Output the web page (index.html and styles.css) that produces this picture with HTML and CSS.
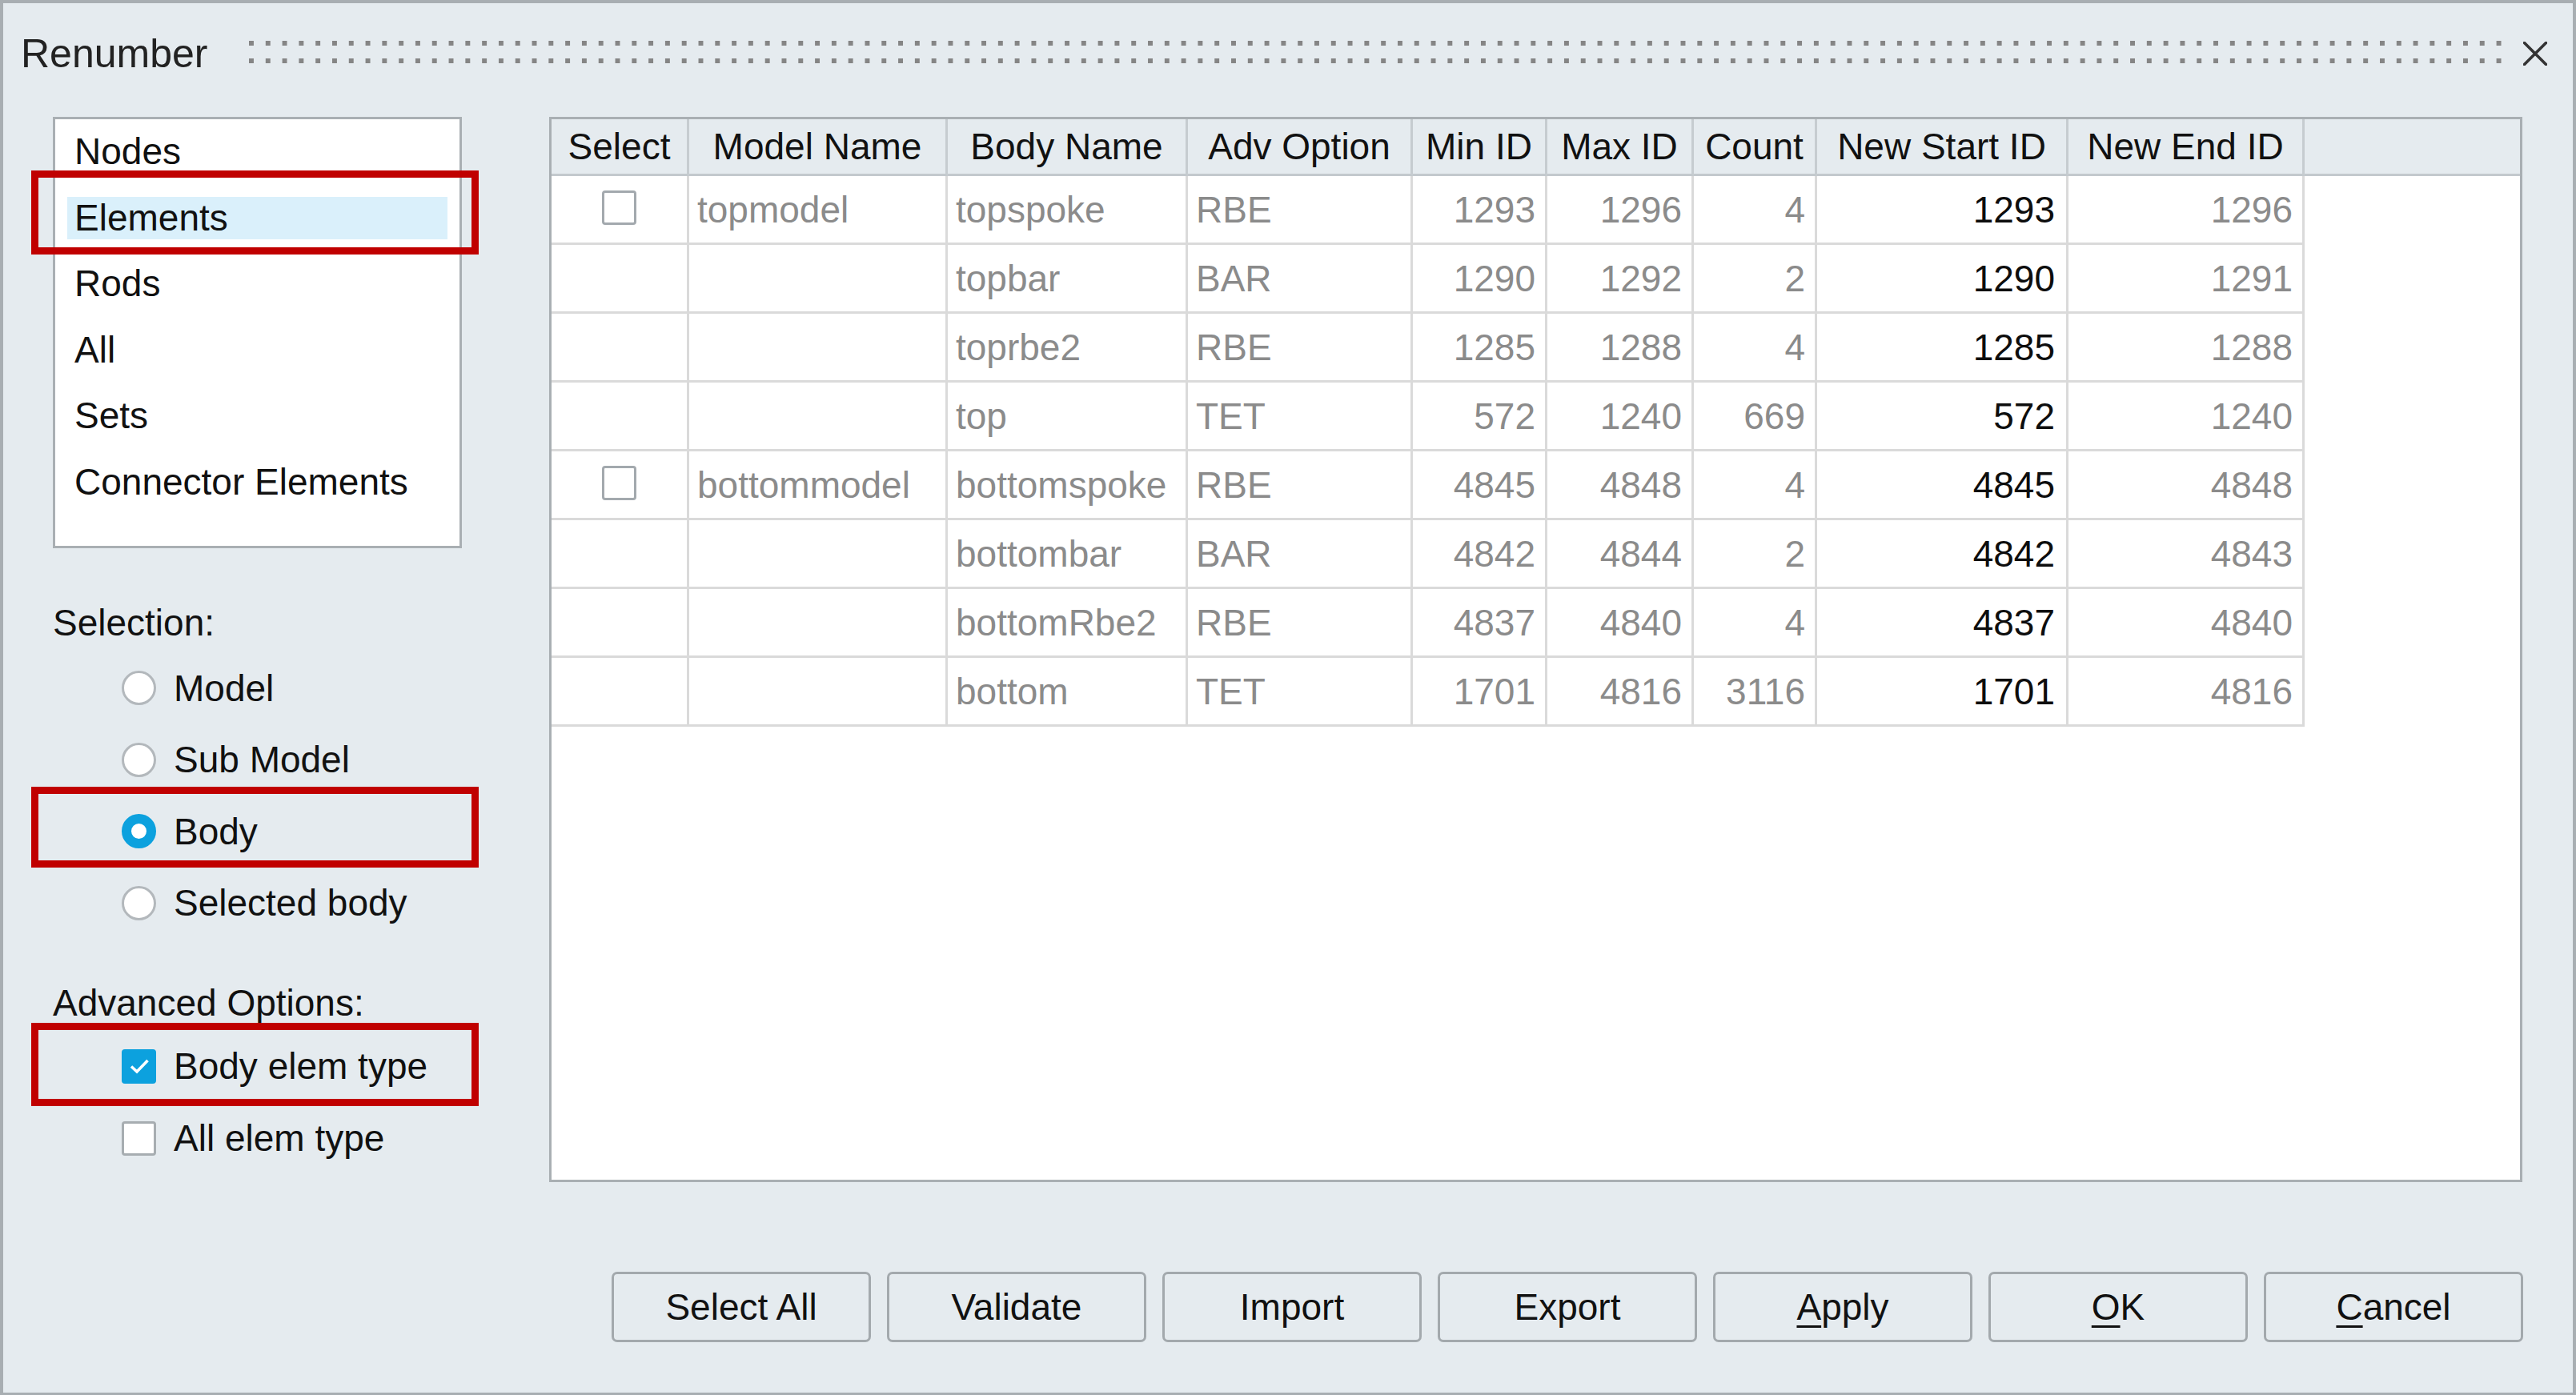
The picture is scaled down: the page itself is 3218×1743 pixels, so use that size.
FILE: index.html
```html
<!doctype html>

<html lang="en">
  <head>
    <meta charset="utf-8"/>
    <title>Renumber</title>
    <link rel="stylesheet" href="styles.css">
  </head>
  <body>
    <div class="dialog">
      <div class="titlebar">
        <span class="titlebar__title">Renumber</span>
        <span class="titlebar__grip"></span>
        <span class="titlebar__close">
          <svg width="30" height="30" viewBox="0 0 30 30">
            <path d="M1.5 1.5 L28.5 28.5 M28.5 1.5 L1.5 28.5" stroke="#333" stroke-width="3.6" stroke-linecap="round"/>
          </svg>
        </span>
      </div>

      <div class="main">
        <div class="side">
          <ul class="list">
            <li class="list__item">Nodes</li>
            <li class="list__item list__item_active">Elements</li>
            <li class="list__item">Rods</li>
            <li class="list__item">All</li>
            <li class="list__item">Sets</li>
            <li class="list__item">Connector Elements</li>
          </ul>

          <p class="side__label">Selection:</p>
          <div class="options">
            <label class="option"><span class="radio"></span>Model</label>
            <label class="option"><span class="radio"></span>Sub Model</label>
            <label class="option"><span class="radio radio_on"></span>Body</label>
            <label class="option"><span class="radio"></span>Selected body</label>
          </div>

          <p class="side__label side__label_adv">Advanced Options:</p>
          <div class="options options_adv">
            <label class="option">
              <span class="check check_on">
                <svg width="30" height="30" viewBox="0 0 30 30">
                  <path d="M5 15.5 L12 22 L25.5 8" fill="none" stroke="#fff" stroke-width="3.6"/>
                </svg>
              </span>Body elem type
            </label>
            <label class="option"><span class="check"></span>All elem type</label>
          </div>

          <span class="mark mark_elements"></span>
          <span class="mark mark_body"></span>
          <span class="mark mark_adv"></span>
        </div>

        <div class="grid">
          <table class="grid__table">
            <thead>
              <tr>
                <th class="col-select">Select</th>
                <th class="col-model">Model Name</th>
                <th class="col-body">Body Name</th>
                <th class="col-adv">Adv Option</th>
                <th class="col-min">Min ID</th>
                <th class="col-max">Max ID</th>
                <th class="col-count">Count</th>
                <th class="col-start">New Start ID</th>
                <th class="col-end">New End ID</th>
                <th class="filler"></th>
              </tr>
            </thead>
            <tbody>
              <tr>
                <td class="cell-check"><span class="check"></span></td>
                <td>topmodel</td>
                <td>topspoke</td>
                <td>RBE</td>
                <td class="num">1293</td>
                <td class="num">1296</td>
                <td class="num">4</td>
                <td class="num num_new">1293</td>
                <td class="num">1296</td>
                <td class="filler"></td>
              </tr>
              <tr>
                <td></td>
                <td></td>
                <td>topbar</td>
                <td>BAR</td>
                <td class="num">1290</td>
                <td class="num">1292</td>
                <td class="num">2</td>
                <td class="num num_new">1290</td>
                <td class="num">1291</td>
                <td class="filler"></td>
              </tr>
              <tr>
                <td></td>
                <td></td>
                <td>toprbe2</td>
                <td>RBE</td>
                <td class="num">1285</td>
                <td class="num">1288</td>
                <td class="num">4</td>
                <td class="num num_new">1285</td>
                <td class="num">1288</td>
                <td class="filler"></td>
              </tr>
              <tr>
                <td></td>
                <td></td>
                <td>top</td>
                <td>TET</td>
                <td class="num">572</td>
                <td class="num">1240</td>
                <td class="num">669</td>
                <td class="num num_new">572</td>
                <td class="num">1240</td>
                <td class="filler"></td>
              </tr>
              <tr>
                <td class="cell-check"><span class="check"></span></td>
                <td>bottommodel</td>
                <td>bottomspoke</td>
                <td>RBE</td>
                <td class="num">4845</td>
                <td class="num">4848</td>
                <td class="num">4</td>
                <td class="num num_new">4845</td>
                <td class="num">4848</td>
                <td class="filler"></td>
              </tr>
              <tr>
                <td></td>
                <td></td>
                <td>bottombar</td>
                <td>BAR</td>
                <td class="num">4842</td>
                <td class="num">4844</td>
                <td class="num">2</td>
                <td class="num num_new">4842</td>
                <td class="num">4843</td>
                <td class="filler"></td>
              </tr>
              <tr>
                <td></td>
                <td></td>
                <td>bottomRbe2</td>
                <td>RBE</td>
                <td class="num">4837</td>
                <td class="num">4840</td>
                <td class="num">4</td>
                <td class="num num_new">4837</td>
                <td class="num">4840</td>
                <td class="filler"></td>
              </tr>
              <tr>
                <td></td>
                <td></td>
                <td>bottom</td>
                <td>TET</td>
                <td class="num">1701</td>
                <td class="num">4816</td>
                <td class="num">3116</td>
                <td class="num num_new">1701</td>
                <td class="num">4816</td>
                <td class="filler"></td>
              </tr>
            </tbody>
          </table>
        </div>
      </div>

      <div class="buttons">
        <button class="button">Select All</button>
        <button class="button">Validate</button>
        <button class="button">Import</button>
        <button class="button">Export</button>
        <button class="button"><span class="hotkey">A</span>pply</button>
        <button class="button"><span class="hotkey">O</span>K</button>
        <button class="button"><span class="hotkey">C</span>ancel</button>
      </div>
    </div>
  </body>
</html>
```

FILE: styles.css
```css
* {
  box-sizing: border-box;
}
body {
  font-family: "Liberation Sans", Arial, sans-serif;
  font-size: 46px;
  color: #1b1b1b;
  background-color: #e5ebef;
  margin: 0;
}
.dialog {
  display: flex;
  flex-direction: column;
  width: 100vw;
  height: 100vh;
  border: 4px solid #a8aeb2;
  border-bottom-width: 3px;
  background-color: #e5ebef;
}
.titlebar {
  display: flex;
  align-items: center;
  height: 126px;
  padding: 0 32px 0 22px;
  flex-shrink: 0;
}
.titlebar__title {
  font-size: 50px;
  color: #222;
}
.titlebar__grip {
  flex: 1;
  height: 28px;
  margin: -4px 27px 0 52px;
  background-image: conic-gradient(at 6px 6px, transparent 75%, #858585 0);
  background-size: 20.8px 22px;
}
.titlebar__close {
  display: block;
  width: 30px;
  height: 30px;
}
.titlebar__close svg {
  display: block;
}
.main {
  display: flex;
  flex: 1;
  margin-top: 16px;
  padding: 0 63px 0 35px;
  min-height: 0;
}
.side {
  position: relative;
  width: 559px;
  flex-shrink: 0;
}
.list {
  display: flex;
  flex-direction: column;
  gap: 29.5px;
  list-style: none;
  margin: 0 0 0 27px;
  padding: 14px 15px 0;
  width: 511px;
  height: 539px;
  border: 3px solid #a9afb3;
  background-color: #fff;
}
.list__item {
  height: 53px;
  line-height: 53px;
  padding-left: 9px;
  color: #111;
  flex-shrink: 0;
}
.list__item_active {
  background-color: #daf0fb;
}
.side__label {
  margin: 63px 0 0 27px;
  line-height: 60px;
  color: #111;
}
.side__label_adv {
  margin-top: 50px;
}
.options {
  margin-top: 7px;
}
.options_adv {
  margin-top: 4px;
}
.option {
  display: flex;
  align-items: center;
  height: 89.5px;
  padding-left: 113px;
  gap: 22px;
  color: #111;
}
.options_adv .option {
  height: 90px;
}
.radio {
  display: block;
  width: 43px;
  height: 43px;
  border: 3px solid #b3b8bc;
  border-radius: 50%;
  background-color: #fff;
}
.radio_on {
  border: 12px solid #0ca1de;
}
.check {
  display: flex;
  align-items: center;
  justify-content: center;
  width: 43px;
  height: 43px;
  border: 3px solid #a7adb1;
  border-radius: 4px;
  background-color: #fff;
}
.check_on {
  border-color: #0ca1de;
  background-color: #0ca1de;
}
.mark {
  position: absolute;
  left: 0;
  width: 559px;
  border: 9px solid #c00000;
  pointer-events: none;
}
.mark_elements {
  top: 67px;
  height: 105px;
}
.mark_body {
  top: 837px;
  height: 101px;
}
.mark_adv {
  top: 1132px;
  height: 104px;
}
.grid {
  flex: 1;
  margin-left: 88px;
  border: 3px solid #a9afb3;
  background-color: #fff;
  overflow: hidden;
}
.grid__table {
  width: 100%;
  table-layout: fixed;
  border-collapse: separate;
  border-spacing: 0;
}
.grid__table th {
  height: 71px;
  padding: 0;
  font-weight: normal;
  text-align: center;
  color: #111;
  background-color: #e5ebef;
  border-right: 3px solid #c6ccd0;
  border-bottom: 3px solid #c3c9cd;
  white-space: nowrap;
}
.grid__table td {
  height: 86px;
  padding: 0 0 0 10px;
  color: #8b8b8b;
  border-right: 3px solid #dadada;
  border-bottom: 3px solid #dadada;
  white-space: nowrap;
}
.grid__table .filler {
  border-right: none;
}
.grid__table td.filler {
  border-bottom: none;
}
.col-select { width: 172px; }
.col-model { width: 323px; }
.col-body { width: 300px; }
.col-adv { width: 281px; }
.col-min { width: 168px; }
.col-max { width: 183px; }
.col-count { width: 154px; }
.col-start { width: 314px; }
.col-end { width: 295px; }
.grid__table td.num {
  text-align: right;
  padding: 0 12px 0 0;
}
.grid__table td.num_new {
  color: #0d0d0d;
  padding-right: 14px;
}
.grid__table td.cell-check {
  padding: 0;
}
.cell-check .check {
  margin: -4px auto 0;
  border-color: #a3a9ae;
}
.buttons {
  display: flex;
  justify-content: flex-end;
  gap: 20px;
  margin-top: 112px;
  padding: 0 62px 0 0;
  height: 88px;
  margin-bottom: 63px;
  flex-shrink: 0;
}
.button {
  width: 324px;
  height: 88px;
  font-family: inherit;
  font-size: 46px;
  color: #111;
  background-color: #e5ebef;
  border: 3px solid #a3a9ad;
  border-radius: 7px;
  padding: 0;
}
.hotkey {
  text-decoration: underline;
  text-decoration-thickness: 3px;
  text-underline-offset: 7px;
}
```
